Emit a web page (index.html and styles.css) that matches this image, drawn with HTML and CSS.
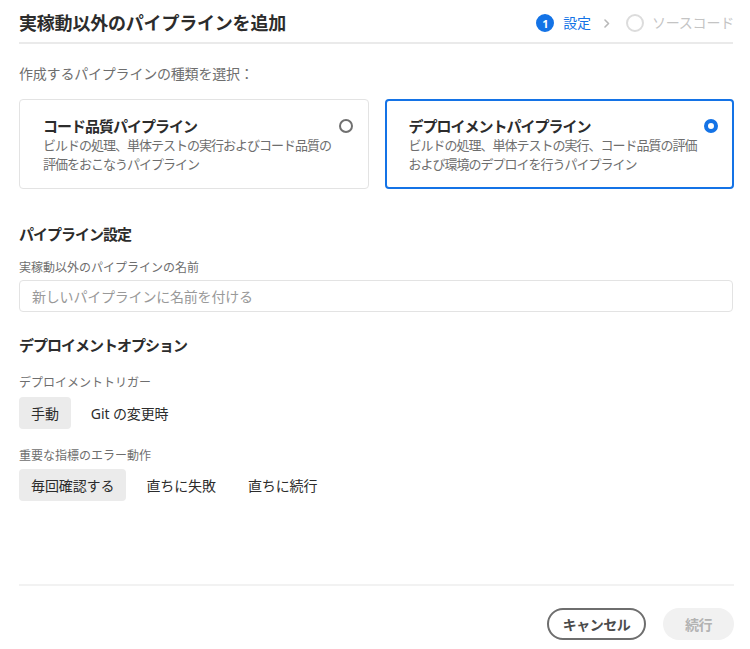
FILE: index.html
```html
<!DOCTYPE html>
<html lang="ja">
<head>
<meta charset="utf-8">
<title>実稼動以外のパイプラインを追加</title>
<link rel="stylesheet" href="styles.css">
</head>
<body>
<div class="page">
  <header class="header">
    <h1 class="title">実稼動以外のパイプラインを追加</h1>
    <div class="stepper">
      <span class="step-num active">1</span>
      <span class="step-label active">設定</span>
      <svg class="chev" width="6" height="9" viewBox="0 0 6 9"><path d="M1 1 L4.5 4.5 L1 8" fill="none" stroke="#b8b8b8" stroke-width="1.6" stroke-linecap="round" stroke-linejoin="round"/></svg>
      <span class="step-num"></span>
      <span class="step-label">ソースコード</span>
    </div>
  </header>

  <main class="main">
    <p class="intro">作成するパイプラインの種類を選択：</p>
    <div class="cards">
      <div class="card">
        <div class="card-body">
          <div class="card-title">コード品質パイプライン</div>
          <div class="card-desc">ビルドの処理、単体テストの実行およびコード品質の評価をおこなうパイプライン</div>
        </div>
        <span class="radio"></span>
      </div>
      <div class="card selected">
        <div class="card-body">
          <div class="card-title">デプロイメントパイプライン</div>
          <div class="card-desc">ビルドの処理、単体テストの実行、コード品質の評価および環境のデプロイを行うパイプライン</div>
        </div>
        <span class="radio checked"></span>
      </div>
    </div>

    <h2 class="section-title first">パイプライン設定</h2>
    <label class="field-label">実稼動以外のパイプラインの名前</label>
    <div class="input">新しいパイプラインに名前を付ける</div>

    <h2 class="section-title second">デプロイメントオプション</h2>
    <div class="field-label gap-big">デプロイメントトリガー</div>
    <div class="toggle-row">
      <span class="toggle on">手動</span>
      <span class="toggle">Git の変更時</span>
    </div>
    <div class="field-label gap-mid">重要な指標のエラー動作</div>
    <div class="toggle-row tight">
      <span class="toggle on">毎回確認する</span>
      <span class="toggle">直ちに失敗</span>
      <span class="toggle">直ちに続行</span>
    </div>
  </main>

  <footer class="footer">
    <button class="btn btn-cancel">キャンセル</button>
    <button class="btn btn-next">続行</button>
  </footer>
</div>
</body>
</html>
```

FILE: styles.css
```css
html, body {
  margin: 0;
  padding: 0;
  background: #ffffff;
}

body {
  font-family: "Noto Sans", "Noto Sans CJK JP", sans-serif;
  color: #2c2c2c;
}

.page {
  height: 649px;
  padding: 0 16px 0 19px;
  display: flex;
  flex-direction: column;
  box-sizing: border-box;
}

.header {
  height: 42px;
  display: flex;
  align-items: center;
  justify-content: space-between;
  border-bottom: 2px solid #eaeaea;
  margin-right: 1px;
}

.title {
  margin: 0;
  font-size: 18px;
  line-height: 24px;
  font-weight: 700;
  letter-spacing: -0.2px;
  color: #2c2c2c;
  padding-top: 3px;
}

.stepper {
  display: flex;
  align-items: center;
  padding-top: 4px;
  margin-right: -1px;
}

.step-num {
  width: 18px;
  height: 18px;
  border-radius: 50%;
  box-sizing: border-box;
  border: 2px solid #dcdcdc;
  display: flex;
  align-items: center;
  justify-content: center;
  font-size: 11px;
  font-weight: 700;
  color: #fff;
  margin-right: 8px;
}

.step-num.active {
  background: #1473e6;
  border-color: #1473e6;
  margin-right: 9px;
}

.step-label {
  font-size: 14px;
  line-height: 20px;
  color: #c4c4c4;
  letter-spacing: -0.2px;
}

.step-label.active {
  color: #1473e6;
}

.chev {
  margin: 0 16px 0 13px;
}

.main {
  flex: 1;
  display: flex;
  flex-direction: column;
}

.intro {
  margin: 20px 0 0;
  font-size: 14px;
  line-height: 20px;
  color: #6e6e6e;
  letter-spacing: -0.2px;
}

.cards {
  display: grid;
  grid-template-columns: 1fr 1fr;
  gap: 16px;
  margin-top: 15px;
}

.card {
  height: 90px;
  box-sizing: border-box;
  border: 1px solid #e3e3e3;
  border-radius: 4px;
  padding: 16px 15px 0 23px;
  display: flex;
  align-items: flex-start;
  justify-content: space-between;
}

.card.selected {
  border: 2px solid #1473e6;
  padding: 15px 14px 0 22px;
}

.card-title {
  font-size: 15px;
  line-height: 20px;
  font-weight: 700;
  letter-spacing: -1px;
  color: #2c2c2c;
}

.card-desc {
  width: 292px;
  font-size: 13px;
  line-height: 19px;
  letter-spacing: -1px;
  color: #6e6e6e;
}

.radio {
  flex: none;
  width: 14px;
  height: 14px;
  box-sizing: border-box;
  border: 2px solid #707070;
  border-radius: 50%;
  margin-top: 3px;
}

.radio.checked {
  border: 4px solid #1473e6;
  background: #fff;
}

.section-title {
  margin: 0;
  font-size: 15px;
  line-height: 20px;
  font-weight: 700;
  letter-spacing: -1px;
  color: #2c2c2c;
}

.section-title.first {
  margin-top: 35px;
}

.section-title.second {
  margin-top: 23px;
}

.field-label {
  display: block;
  margin-top: 16px;
  font-size: 12px;
  line-height: 16px;
  color: #6e6e6e;
}

.field-label.gap-big {
  margin-top: 20px;
}

.field-label.gap-mid {
  margin-top: 19px;
}

.input {
  margin-top: 4px;
  height: 32px;
  box-sizing: border-box;
  border: 1px solid #e3e3e3;
  border-radius: 4px;
  padding: 0 12px;
  display: flex;
  align-items: center;
  font-size: 14px;
  color: #999999;
  letter-spacing: -0.2px;
  margin-right: 1px;
}

.toggle-row {
  display: flex;
  gap: 8px;
  margin-top: 6px;
}

.toggle-row.tight {
  margin-top: 5px;
}

.toggle {
  height: 32px;
  padding: 0 12px;
  border-radius: 4px;
  display: flex;
  align-items: center;
  font-size: 14px;
  color: #2c2c2c;
  letter-spacing: -0.1px;
}

.toggle.on {
  background: #ebebeb;
}

.footer {
  border-top: 2px solid #f2f2f2;
  padding: 22px 0 9px;
  display: flex;
  justify-content: flex-end;
  gap: 17px;
}

.btn {
  height: 32px;
  border-radius: 16px;
  font-family: "Noto Sans", "Noto Sans CJK JP", sans-serif;
  font-size: 14px;
  font-weight: 700;
  padding: 0;
  white-space: nowrap;
  letter-spacing: -0.5px;
  cursor: pointer;
}

.btn-cancel {
  background: #fff;
  border: 2px solid #6e6e6e;
  color: #4b4b4b;
  width: 99px;
}

.btn-next {
  background: #f1f1f1;
  border: none;
  color: #b3b3b3;
  width: 71px;
}
```
